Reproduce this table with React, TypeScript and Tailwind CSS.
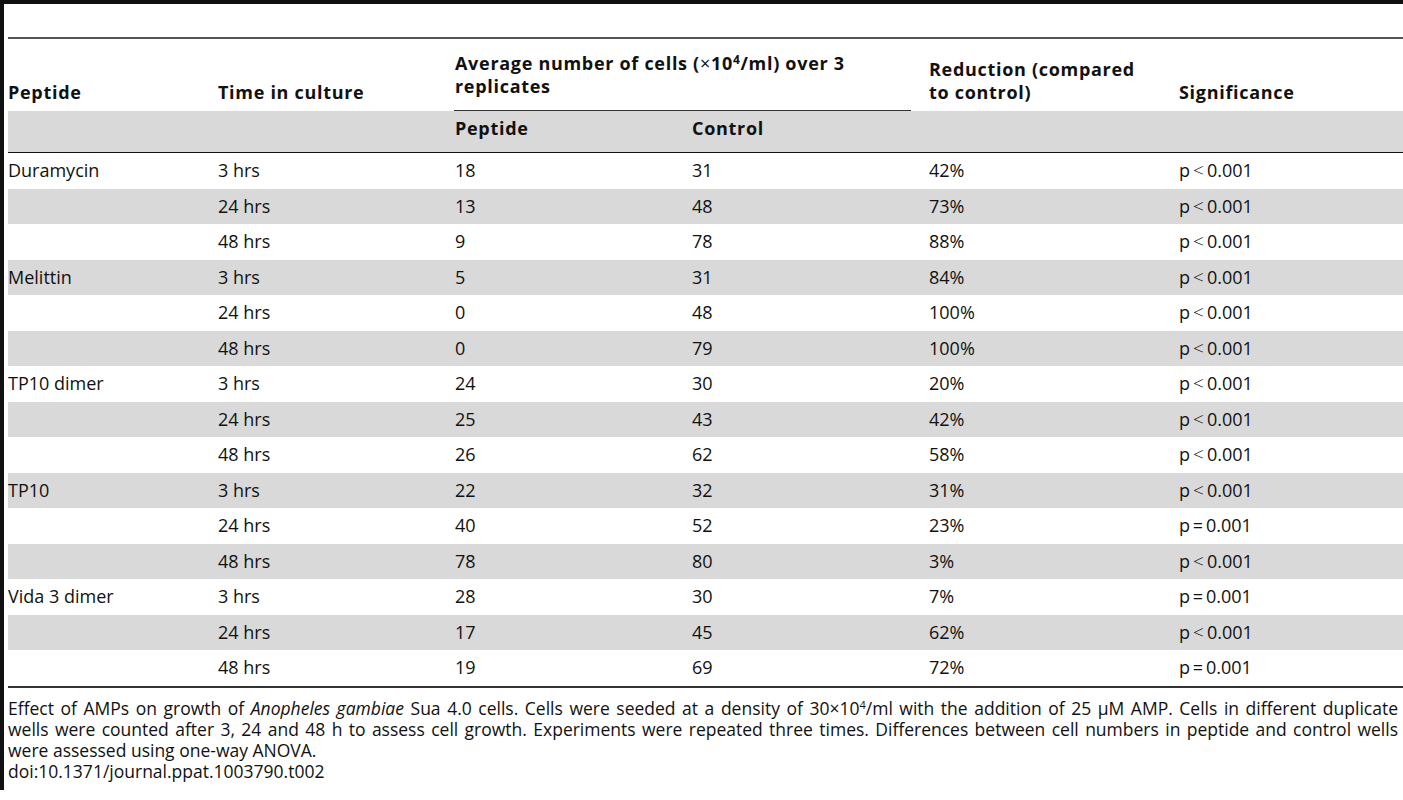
import React from "react";

type Row = { pep: string; time: string; p: string; c: string; red: string; sig: string };

const rows: Row[] = [
  { pep: "Duramycin", time: "3 hrs", p: "18", c: "31", red: "42%", sig: "lt" },
  { pep: "", time: "24 hrs", p: "13", c: "48", red: "73%", sig: "lt" },
  { pep: "", time: "48 hrs", p: "9", c: "78", red: "88%", sig: "lt" },
  { pep: "Melittin", time: "3 hrs", p: "5", c: "31", red: "84%", sig: "lt" },
  { pep: "", time: "24 hrs", p: "0", c: "48", red: "100%", sig: "lt" },
  { pep: "", time: "48 hrs", p: "0", c: "79", red: "100%", sig: "lt" },
  { pep: "TP10 dimer", time: "3 hrs", p: "24", c: "30", red: "20%", sig: "lt" },
  { pep: "", time: "24 hrs", p: "25", c: "43", red: "42%", sig: "lt" },
  { pep: "", time: "48 hrs", p: "26", c: "62", red: "58%", sig: "lt" },
  { pep: "TP10", time: "3 hrs", p: "22", c: "32", red: "31%", sig: "lt" },
  { pep: "", time: "24 hrs", p: "40", c: "52", red: "23%", sig: "eq" },
  { pep: "", time: "48 hrs", p: "78", c: "80", red: "3%", sig: "lt" },
  { pep: "Vida 3 dimer", time: "3 hrs", p: "28", c: "30", red: "7%", sig: "eq" },
  { pep: "", time: "24 hrs", p: "17", c: "45", red: "62%", sig: "lt" },
  { pep: "", time: "48 hrs", p: "19", c: "69", red: "72%", sig: "eq" },
];

function Sig({ kind }: { kind: string }) {
  if (kind === "lt") {
    return (
      <span>
        p<span className="inline-block w-[17px] text-center font-light text-[19px] leading-none">&lt;</span>0.001
      </span>
    );
  }
  return (
    <span>
      p<span className="inline-block w-[16px] text-center">=</span>0.001
    </span>
  );
}

const grid = "grid grid-cols-[210px_237px_237px_237px_250px_1fr]";

export default function App() {
  return (
    <div
      className="w-[1403px] h-[800px] bg-white text-[#111] overflow-hidden flex flex-col"
      style={{ fontFamily: '"Open Sans", "Noto Sans", sans-serif' }}
    >
      <div className="h-[4px] w-full bg-[#111] shrink-0" />
      <div className="flex items-stretch">
        <div className="w-[4px] bg-[#111] shrink-0" />
        <div className="flex-1 pl-[4px] pt-[33px] pb-[7px]">
          {/* top rule */}
          <div className="h-[2px] bg-[#555]" />
          {/* header row 1 */}
          <div className={`${grid} h-[72px] text-[18px] leading-[23px] font-bold tracking-[0.7px]`}>
            <div className="flex items-end pb-[7px]">Peptide</div>
            <div className="flex items-end pb-[7px]">Time in culture</div>
            <div className="col-span-2 flex items-end pr-[17px]">
              <div className="w-full border-b-[1.5px] border-[#333] pb-[12px] -ml-[1px] pl-[1px]">
                Average number of cells (<span className="font-normal">×</span>10
                <sup className="text-[12px]">4</sup>/ml) over 3
                <br />
                replicates
              </div>
            </div>
            <div className="flex items-end pb-[7px]">
              Reduction (compared
              <br />
              to control)
            </div>
            <div className="flex items-end pb-[7px]">Significance</div>
          </div>
          {/* header row 2 */}
          <div
            className={`${grid} h-[42px] bg-[#d9d9d9] border-b border-[#111] text-[18px] leading-[23px] font-bold tracking-[0.7px]`}
          >
            <div />
            <div />
            <div className="pt-[6px]">Peptide</div>
            <div className="pt-[6px]">Control</div>
            <div />
            <div />
          </div>
          {/* body */}
          <div className="text-[18px]">
            {rows.map((r, i) => (
              <div
                key={i}
                className={`${grid} h-[35.5px] items-center ${i % 2 === 1 ? "bg-[#d9d9d9]" : "bg-white"}`}
              >
                <div>{r.pep}</div>
                <div>{r.time}</div>
                <div>{r.p}</div>
                <div>{r.c}</div>
                <div>{r.red}</div>
                <div>
                  <Sig kind={r.sig} />
                </div>
              </div>
            ))}
          </div>
          <div className="h-[2px] bg-[#333]" />
          {/* caption */}
          <div className="mt-[10px] text-[17.5px] leading-[21.3px] pr-[5px]">
            <div className="text-justify [text-align-last:justify]">
              Effect of AMPs on growth of <i>Anopheles gambiae</i> Sua 4.0 cells. Cells were seeded at a density of
              30×10
              <sup className="text-[11px]">4</sup>/ml with the addition of 25 µM AMP. Cells in different duplicate
            </div>
            <div className="text-justify [text-align-last:justify]">
              wells were counted after 3, 24 and 48 h to assess cell growth. Experiments were repeated three times.
              Differences between cell numbers in peptide and control wells
            </div>
            <div>were assessed using one-way ANOVA.</div>
            <div>doi:10.1371/journal.ppat.1003790.t002</div>
          </div>
        </div>
      </div>
    </div>
  );
}
